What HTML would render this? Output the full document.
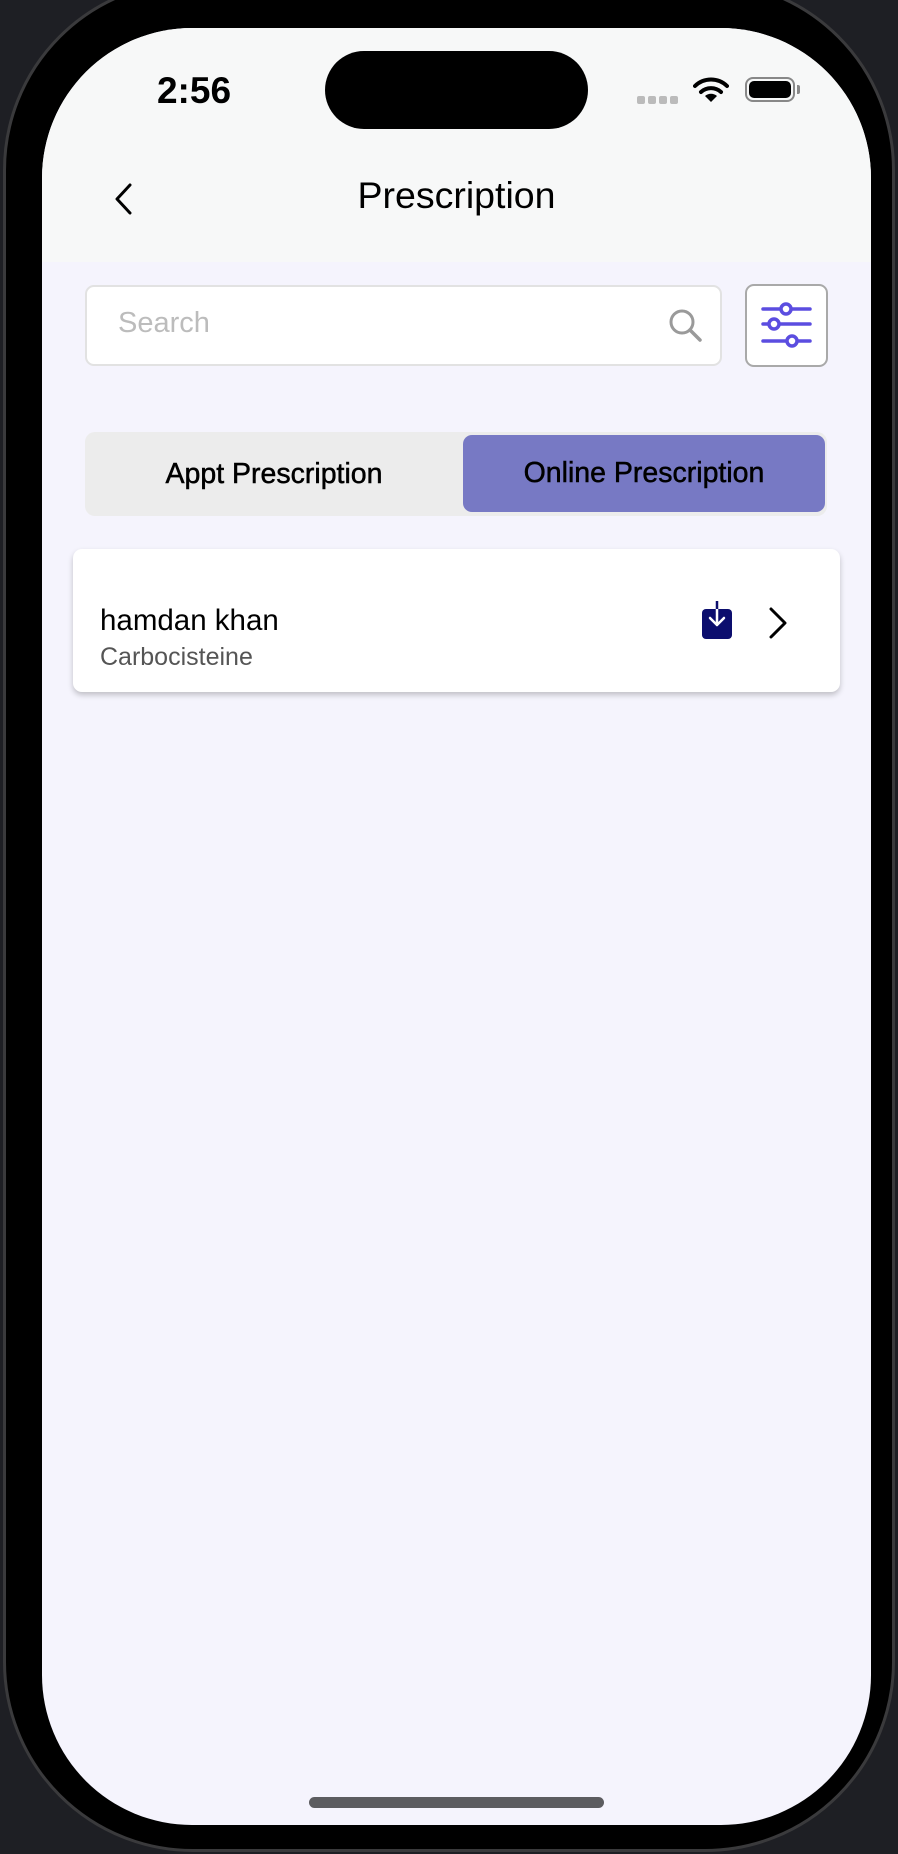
<!DOCTYPE html>
<html><head><meta charset="utf-8"><style>
*{margin:0;padding:0;box-sizing:border-box}
body{width:898px;height:1854px;background:#1e1f24;position:relative;overflow:hidden;font-family:"Liberation Sans",Arial,sans-serif}
.frame{position:absolute;left:3px;top:-20px;width:892px;height:1872px;background:#000;border-radius:190px;border:3px solid #3a3a3c}
.screen{position:absolute;left:42px;top:28px;width:829px;height:1797px;background:#f5f4fd;border-radius:150px;overflow:hidden}
.hdr{position:absolute;left:0;top:0;width:100%;height:234px;background:#f7f8f8}
.abs{position:absolute}
.med{-webkit-text-stroke:0.5px #000}
</style></head><body>
<div class="frame"></div>
<div class="screen">
 <div class="hdr"></div>
 <div class="abs" style="left:107px;top:42px;width:90px;text-align:center;font-size:37px;font-weight:bold;color:#000">2:56</div>
 <div class="abs" style="left:283px;top:23px;width:263px;height:78px;background:#000;border-radius:39px"></div>
 <div class="abs" style="left:595px;top:68px;width:8px;height:8px;border-radius:2px;background:#bbb;box-shadow:11px 0 #bbb,22px 0 #bbb,33px 0 #bbb"></div>
 <svg class="abs" style="left:651px;top:48px" width="36" height="28" viewBox="0 0 36 28"><path d="M2 10 A23 23 0 0 1 34 10" stroke="#000" stroke-width="4" fill="none" stroke-linecap="round"/><path d="M8 16 A15 15 0 0 1 28 16" stroke="#000" stroke-width="4" fill="none" stroke-linecap="round"/><path d="M18 26 L12 20 A9 9 0 0 1 24 20Z" fill="#000"/></svg>
 <div class="abs" style="left:703px;top:49px;width:50px;height:25px;border:2px solid #888;border-radius:8px;padding:2px"><div style="width:100%;height:100%;background:#000;border-radius:5px"></div></div>
 <div class="abs" style="left:755px;top:57px;width:3px;height:9px;background:#888;border-radius:0 2px 2px 0"></div>
 <svg class="abs" style="left:70px;top:154px" width="24" height="34" viewBox="0 0 24 34"><path d="M18 3 L5 17 L18 31" stroke="#000" stroke-width="3" fill="none" stroke-linecap="round" stroke-linejoin="round"/></svg>
 <div class="abs" style="left:0;top:146px;width:829px;text-align:center;font-size:37.5px;color:#000">Prescription</div>
 <div class="abs" style="left:43px;top:257px;width:637px;height:81px;background:#fff;border:2px solid #e2e2e2;border-radius:9px"></div>
 <div class="abs" style="left:76px;top:279px;font-size:29px;color:#bcbcbc">Search</div>
 <svg class="abs" style="left:625px;top:279px" width="38" height="38" viewBox="0 0 38 38"><circle cx="15" cy="15" r="11" stroke="#9a9a9a" stroke-width="3" fill="none"/><path d="M23 23 L33 33" stroke="#9a9a9a" stroke-width="3.5" stroke-linecap="round"/></svg>
 <div class="abs" style="left:703px;top:256px;width:83px;height:83px;background:#fff;border:2px solid #a9a9a9;border-radius:9px"></div>
 <svg class="abs" style="left:703px;top:256px" width="83" height="83" viewBox="0 0 83 83"><g stroke="#5b4de0" stroke-width="3.5" fill="#fff" stroke-linecap="round"><path d="M18 25 H65 M18 40 H65 M18 57 H65"/><circle cx="41" cy="25" r="5"/><circle cx="29" cy="40" r="5"/><circle cx="47" cy="57" r="5"/></g></svg>
 <div class="abs" style="left:43px;top:404px;width:742px;height:84px;background:#ececec;border-radius:10px"></div>
 <div class="abs med" style="left:43px;top:404px;width:378px;height:84px;line-height:84px;text-align:center;font-size:28.5px;color:#000">Appt Prescription</div>
 <div class="abs med" style="left:421px;top:407px;width:362px;height:77px;line-height:77px;background:#7779c4;border-radius:9px;text-align:center;font-size:28.5px;color:#000">Online Prescription</div>
 <div class="abs" style="left:31px;top:521px;width:767px;height:143px;background:#fff;border-radius:9px;box-shadow:0 3px 6px rgba(0,0,0,.22)"></div>
 <div class="abs" style="left:58px;top:576px;font-size:29.5px;color:#000">hamdan khan</div>
 <div class="abs" style="left:58px;top:615px;font-size:25px;color:#555">Carbocisteine</div>
 <svg class="abs" style="left:658px;top:571px" width="34" height="42" viewBox="0 0 34 42"><rect x="2" y="10" width="30" height="30" rx="4" fill="#0c0e6e"/><path d="M17 2 V26 M10 19 L17 26 L24 19" stroke="#fff" stroke-width="2.5" fill="none" stroke-linecap="round" stroke-linejoin="round"/><path d="M17 2 V10" stroke="#0c0e6e" stroke-width="2.5"/></svg>
 <svg class="abs" style="left:724px;top:577px" width="24" height="36" viewBox="0 0 24 36"><path d="M5 4 L19 18 L5 32" stroke="#000" stroke-width="3" fill="none" stroke-linecap="round" stroke-linejoin="round"/></svg>
 <div class="abs" style="left:267px;top:1769px;width:295px;height:11px;background:#5c5c60;border-radius:6px"></div>
</div>
</body></html>
